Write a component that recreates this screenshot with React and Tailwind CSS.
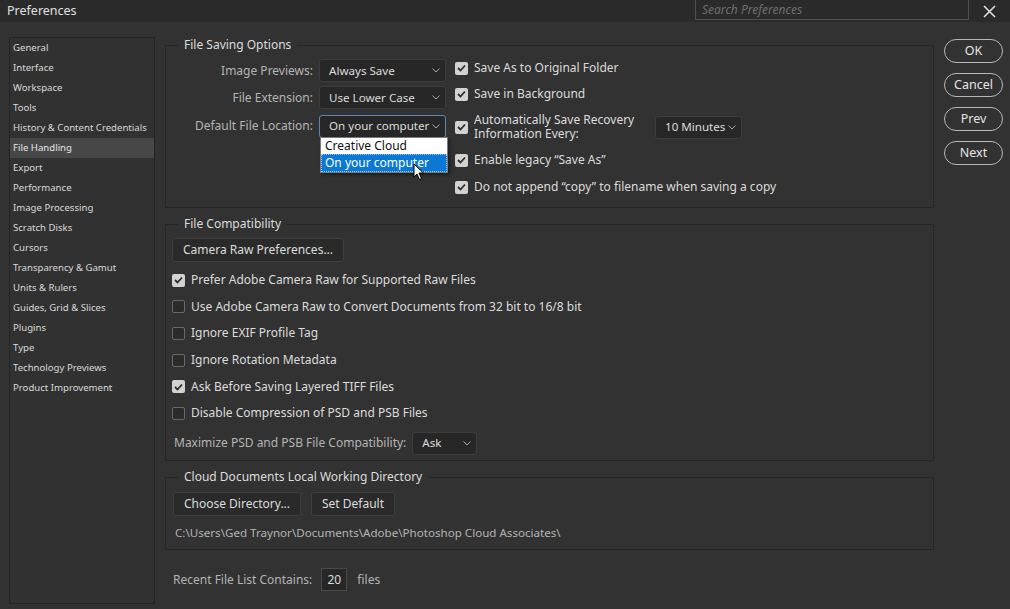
const sidebarItems = [
  "General",
  "Interface",
  "Workspace",
  "Tools",
  "History & Content Credentials",
  "File Handling",
  "Export",
  "Performance",
  "Image Processing",
  "Scratch Disks",
  "Cursors",
  "Transparency & Gamut",
  "Units & Rulers",
  "Guides, Grid & Slices",
  "Plugins",
  "Type",
  "Technology Previews",
  "Product Improvement",
];

function Chevron() {
  return (
    <svg width="8" height="5" viewBox="0 0 8 5" className="shrink-0">
      <path d="M0.5 0.5 L4 4 L7.5 0.5" fill="none" stroke="#a8a8a8" strokeWidth="1" />
    </svg>
  );
}

function Select({ value, width, focused }) {
  return (
    <div
      className={`flex items-center justify-between h-[23px] rounded-[3px] bg-[#272727] pl-[9px] pr-[5px] text-[#dcdcdc] text-[11.6px] border ${
        focused ? "border-[#5b86b8]" : "border-[#3d3d3d]"
      }`}
      style={{ width }}
    >
      <span className="whitespace-nowrap">{value}</span>
      <Chevron />
    </div>
  );
}

function Check({ checked }) {
  if (!checked) {
    return <div className="w-[13px] h-[13px] rounded-[2px] border border-[#6a6a6a] bg-[#2b2b2b] shrink-0" />;
  }
  return (
    <div className="w-[13px] h-[13px] rounded-[2px] bg-[#d2d2d2] flex items-center justify-center shrink-0">
      <svg width="9" height="8" viewBox="0 0 9 8">
        <path d="M1 4 L3.5 6.5 L8 1.5" fill="none" stroke="#2f2f2f" strokeWidth="1.8" />
      </svg>
    </div>
  );
}

function CheckRow({ checked, children, className = "" }) {
  return (
    <div className={`flex items-center gap-[6px] ${className}`}>
      <Check checked={checked} />
      <span className="text-[#dcdcdc] whitespace-nowrap">{children}</span>
    </div>
  );
}

function Button({ children, className = "" }) {
  return (
    <div
      className={`h-[24px] flex items-center justify-center rounded-[3px] bg-[#2a2a2a] border border-[#3e3e3e] text-[#dcdcdc] ${className}`}
    >
      {children}
    </div>
  );
}

function Group({ title, children, className = "" }) {
  return (
    <fieldset className={`border border-[#262626] min-w-0 ${className}`}>
      <legend className="ml-[12px] px-[6px] leading-[16px] text-[#dcdcdc]">{title}</legend>
      {children}
    </fieldset>
  );
}

function RoundButton({ children }) {
  return (
    <div className="h-[24px] w-[59px] rounded-full border-[1.5px] border-[#b8b8b8] flex items-center justify-center text-[#e4e4e4] text-[12.5px]">
      {children}
    </div>
  );
}

export default function App() {
  return (
    <div
      className="w-[1010px] h-[609px] bg-[#323232] overflow-hidden flex flex-col text-[12px] select-none"
      style={{ fontFamily: '"Noto Sans", "Open Sans", sans-serif' }}
    >
      {/* title bar */}
      <div className="h-[22px] bg-[#2a2a2a] flex items-center shrink-0">
        <span className="ml-[7px] text-[#e0e0e0] text-[12.5px]">Preferences</span>
        <div className="ml-auto h-[20px] w-[274px] self-start border border-t-0 border-[#505050] bg-[#2a2a2a] flex items-center pl-[6px]">
          <span className="italic text-[#6e6e6e] text-[12px]">Search Preferences</span>
        </div>
        <div className="w-[41px] flex justify-center">
          <svg width="13" height="13" viewBox="0 0 13 13">
            <path d="M1 1 L12 12 M12 1 L1 12" stroke="#e0e0e0" strokeWidth="1.6" />
          </svg>
        </div>
      </div>

      {/* body */}
      <div className="flex flex-1 pt-[15px]">
        {/* sidebar */}
        <div className="ml-[9px] w-[146px] h-[567px] border border-[#252525] bg-[#313131] shrink-0">
          {sidebarItems.map((item) => (
            <div
              key={item}
              className={`h-[20px] flex items-center pl-[3px] text-[9.6px] whitespace-nowrap ${
                item === "File Handling" ? "bg-[#474747] text-[#e6e6e6]" : "text-[#dadada]"
              }`}
            >
              {item}
            </div>
          ))}
        </div>

        {/* main */}
        <div className="ml-[10px] w-[769px] flex flex-col shrink-0">
          <Group title="File Saving Options" className="h-[171px]">
            <div className="flex pt-[6px]">
              {/* left column */}
              <div className="flex flex-col">
                <div className="flex items-center h-[23px]">
                  <span className="w-[147px] text-right text-[#b4b4b4]">Image Previews:</span>
                  <div className="ml-[6px]">
                    <Select value="Always Save" width={127} />
                  </div>
                </div>
                <div className="flex items-center h-[23px] mt-[4px]">
                  <span className="w-[147px] text-right text-[#b4b4b4]">File Extension:</span>
                  <div className="ml-[6px]">
                    <Select value="Use Lower Case" width={127} />
                  </div>
                </div>
                <div className="flex items-center h-[24px] mt-[5px]">
                  <span className="w-[147px] text-right text-[#b4b4b4]">Default File Location:</span>
                  <div className="ml-[6px] relative">
                    <Select value="On your computer" width={127} focused />
                    <div className="absolute left-[1px] top-[22px] w-[128px] border border-[#7a7a7a] bg-white shadow-[2px_2px_3px_rgba(0,0,0,0.4)] z-10">
                      <div className="h-[16px] flex items-center pl-[4px] text-[#111]">Creative Cloud</div>
                      <div className="h-[18px] flex items-center pl-[4px] bg-[#0a78d4] text-white outline-1 outline-dotted outline-[#9ccaf0] -outline-offset-1">
                        On your computer
                      </div>
                    </div>
                    {/* cursor */}
                    <svg
                      width="12"
                      height="18"
                      viewBox="0 0 12 18"
                      className="absolute left-[94px] top-[48px] z-20"
                    >
                      <path
                        d="M1 1 L1 14 L4 11 L6.5 16.5 L8.5 15.5 L6 10 L10.5 10 Z"
                        fill="#ffffff"
                        stroke="#000"
                        strokeWidth="1"
                        strokeLinejoin="round"
                      />
                    </svg>
                  </div>
                </div>
              </div>

              {/* right column */}
              <div className="ml-[9px] flex flex-col">
                <CheckRow checked className="h-[18px]">Save As to Original Folder</CheckRow>
                <CheckRow checked className="h-[18px] mt-[8px]">Save in Background</CheckRow>
                <div className="flex items-center h-[28px] mt-[10px]">
                  <Check checked />
                  <div className="ml-[6px] w-[181px] text-[#dcdcdc] leading-[14px] whitespace-nowrap">
                    <div>Automatically Save Recovery</div>
                    <div>Information Every:</div>
                  </div>
                  <Select value="10 Minutes" width={87} />
                </div>
                <CheckRow checked className="h-[18px] mt-[10px]">Enable legacy “Save As”</CheckRow>
                <CheckRow checked className="h-[18px] mt-[9px]">
                  Do not append “copy” to filename when saving a copy
                </CheckRow>
              </div>
            </div>
          </Group>

          <Group title="File Compatibility" className="mt-[8px] h-[245px]">
            <div className="pl-[6px] pt-[6px]">
              <Button className="w-[172px]">Camera Raw Preferences...</Button>
              <div className="mt-[5px] flex flex-col">
                <CheckRow checked className="h-[26.6px]">Prefer Adobe Camera Raw for Supported Raw Files</CheckRow>
                <CheckRow className="h-[26.6px]">
                  Use Adobe Camera Raw to Convert Documents from 32 bit to 16/8 bit
                </CheckRow>
                <CheckRow className="h-[26.6px]">Ignore EXIF Profile Tag</CheckRow>
                <CheckRow className="h-[26.6px]">Ignore Rotation Metadata</CheckRow>
                <CheckRow checked className="h-[26.6px]">Ask Before Saving Layered TIFF Files</CheckRow>
                <CheckRow className="h-[26.6px]">Disable Compression of PSD and PSB Files</CheckRow>
              </div>
              <div className="flex items-center mt-[5px] pl-[2px]">
                <span className="text-[#b4b4b4]">Maximize PSD and PSB File Compatibility:</span>
                <div className="ml-[6px]">
                  <Select value="Ask" width={65} />
                </div>
              </div>
            </div>
          </Group>

          <Group title="Cloud Documents Local Working Directory" className="mt-[8px] h-[81px]">
            <div className="pl-[7px] pt-[7px]">
              <div className="flex gap-[10px]">
                <Button className="w-[128px]">Choose Directory...</Button>
                <Button className="w-[84px]">Set Default</Button>
              </div>
              <div className="mt-[8px] pl-[2px] text-[#b4b4b4] text-[11.6px] whitespace-nowrap">
                C:\Users\Ged Traynor\Documents\Adobe\Photoshop Cloud Associates\
              </div>
            </div>
          </Group>

          <div className="flex items-center mt-[18px] pl-[8px]">
            <span className="text-[#b4b4b4]">Recent File List Contains:</span>
            <div className="ml-[9px] w-[26px] h-[23px] border border-[#4a4a4a] bg-[#272727] flex items-center justify-center text-[#dcdcdc]">
              20
            </div>
            <span className="ml-[10px] text-[#b4b4b4]">files</span>
          </div>
        </div>

        {/* buttons */}
        <div className="ml-[10px] mt-[2px] flex flex-col gap-[10px]">
          <RoundButton>OK</RoundButton>
          <RoundButton>Cancel</RoundButton>
          <RoundButton>Prev</RoundButton>
          <RoundButton>Next</RoundButton>
        </div>
      </div>
    </div>
  );
}
